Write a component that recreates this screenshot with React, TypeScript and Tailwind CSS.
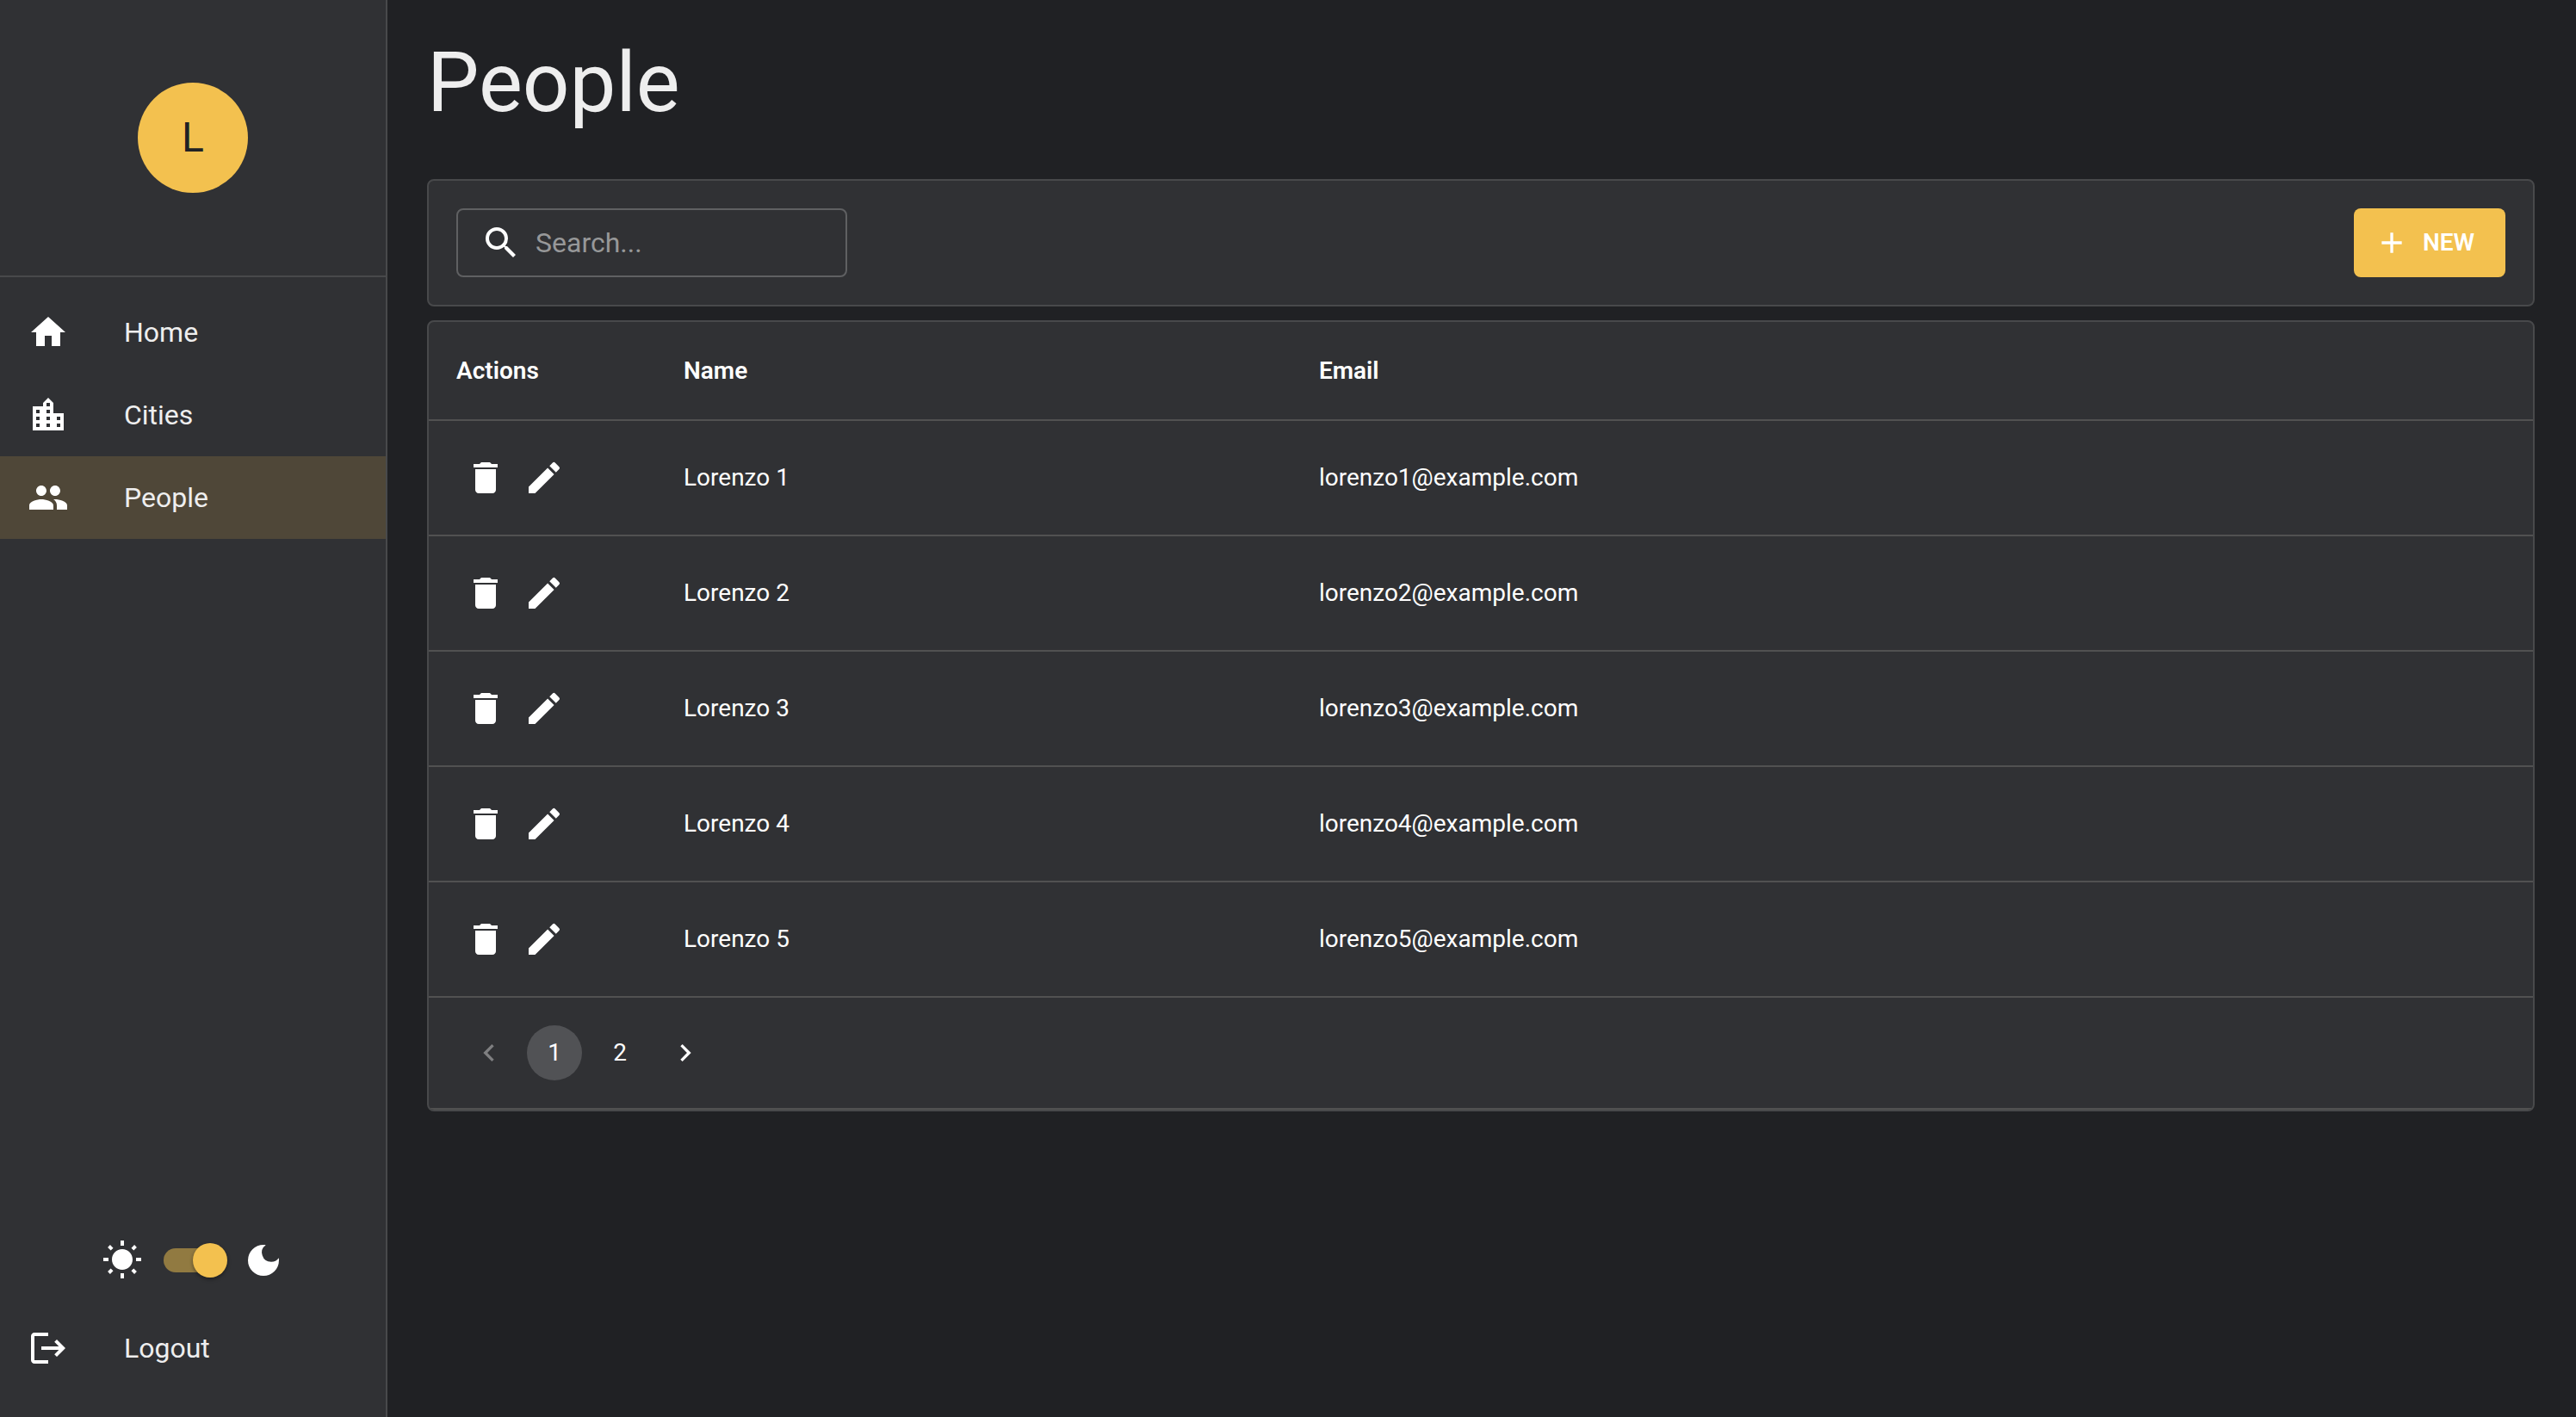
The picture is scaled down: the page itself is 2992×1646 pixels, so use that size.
import { useState } from 'react';
import type { ReactNode } from 'react';
import {
  MdAdd,
  MdDarkMode,
  MdDelete,
  MdEdit,
  MdHome,
  MdLocationCity,
  MdNavigateBefore,
  MdNavigateNext,
  MdPeople,
  MdSearch,
  MdWbSunny,
} from 'react-icons/md';

type Person = { id: number; name: string; email: string };

const people: Person[] = [1, 2, 3, 4, 5].map((id) => ({
  id,
  name: `Lorenzo ${id}`,
  email: `lorenzo${id}@example.com`,
}));

function LogoutIcon() {
  return (
    <svg viewBox="0 0 24 24" fill="currentColor" className="size-12" aria-hidden="true">
      <path d="m17 7-1.41 1.41L18.17 11H8v2h10.17l-2.58 2.58L17 17l5-5zM4 5h8V3H4c-1.1 0-2 .9-2 2v14c0 1.1.9 2 2 2h8v-2H4V5z" />
    </svg>
  );
}

function NavItem({ icon, label, selected = false }: { icon: ReactNode; label: string; selected?: boolean }) {
  return (
    <li>
      <a
        href={`#${label.toLowerCase()}`}
        aria-current={selected ? 'page' : undefined}
        className={`flex h-24 items-center gap-16 px-8 ${selected ? 'bg-[#4f4738]' : ''}`}
      >
        <span className="text-white">{icon}</span>
        <span className="text-[32px] leading-12">{label}</span>
      </a>
    </li>
  );
}

function ThemeSwitch() {
  const [dark, setDark] = useState(true);
  return (
    <div className="flex h-19 items-center justify-center text-white">
      <MdWbSunny className="size-12" aria-hidden="true" />
      <input
        type="checkbox"
        role="switch"
        aria-label="Dark mode"
        checked={dark}
        onChange={(event) => setDark(event.target.checked)}
        className="relative mx-6 h-7 w-17 appearance-none rounded-full bg-[#917a41] before:absolute before:-top-1.5 before:-left-1.5 before:size-10 before:rounded-full before:bg-[#f3c14f] before:shadow-[0_2px_4px_rgba(0,0,0,0.4)] checked:before:left-[34px]"
      />
      <MdDarkMode className="size-12" aria-hidden="true" />
    </div>
  );
}

function Sidebar() {
  return (
    <aside className="flex w-[450px] shrink-0 flex-col border-r-2 border-[#48494b] bg-[#303134]">
      <div className="flex justify-center border-b-2 border-[#48494b] py-24">
        <div className="flex size-32 items-center justify-center rounded-full bg-[#f3c14f] text-5xl text-[#202124]">
          L
        </div>
      </div>
      <nav aria-label="Main" className="grow">
        <ul className="py-4">
          <NavItem icon={<MdHome className="size-12" />} label="Home" />
          <NavItem icon={<MdLocationCity className="size-12" />} label="Cities" />
          <NavItem icon={<MdPeople className="size-12" />} label="People" selected />
        </ul>
      </nav>
      <div className="pb-4">
        <ThemeSwitch />
        <ul className="py-4">
          <NavItem icon={<LogoutIcon />} label="Logout" />
        </ul>
      </div>
    </aside>
  );
}

function Toolbar() {
  return (
    <div className="flex items-center justify-between rounded-lg border-2 border-[#48494b] bg-[#303134] p-8">
      <label className="flex h-20 w-[454px] items-center gap-4 rounded-lg border-2 border-[#5f6062] px-[26px]">
        <MdSearch className="size-12 shrink-0 text-white" aria-hidden="true" />
        <input
          type="search"
          aria-label="Search"
          placeholder="Search..."
          className="w-full min-w-0 bg-transparent text-[32px] leading-12 outline-none placeholder:text-[#979899]"
        />
      </label>
      <button
        type="button"
        className="flex h-20 min-w-44 items-center gap-4 rounded-lg bg-[#f3c14f] pr-8 pl-6 text-[28px] font-semibold text-white uppercase"
      >
        <MdAdd className="size-10" aria-hidden="true" />
        New
      </button>
    </div>
  );
}

function PageButton({ label, current = false }: { label: string; current?: boolean }) {
  return (
    <button
      type="button"
      aria-label={`Page ${label}`}
      aria-current={current ? 'page' : undefined}
      className={`size-16 rounded-full ${current ? 'bg-[#515255]' : ''}`}
    >
      {label}
    </button>
  );
}

function PeopleTable() {
  return (
    <div className="overflow-hidden rounded-lg border-2 border-[#48494b] bg-[#303134]">
      <table className="w-full text-left text-[28px] leading-10 text-white">
        <thead>
          <tr className="h-[114px] border-b-2 border-[#515151]">
            <th className="w-66 px-8 font-semibold">Actions</th>
            <th className="px-8 font-semibold">Name</th>
            <th className="px-8 font-semibold">Email</th>
          </tr>
        </thead>
        <tbody>
          {people.map((person) => (
            <tr key={person.id} className="h-[134px] border-b-2 border-[#515151]">
              <td className="px-8">
                <div className="flex">
                  <button type="button" aria-label={`Delete ${person.name}`} className="p-2.5">
                    <MdDelete className="size-12" />
                  </button>
                  <button type="button" aria-label={`Edit ${person.name}`} className="p-2.5">
                    <MdEdit className="size-12" />
                  </button>
                </div>
              </td>
              <td className="px-8">{person.name}</td>
              <td className="px-8">{person.email}</td>
            </tr>
          ))}
        </tbody>
        <tfoot>
          <tr className="h-[130px] border-b-2 border-[#515151]">
            <td colSpan={3} className="px-8">
              <div className="flex gap-3 px-1.5">
                <button
                  type="button"
                  disabled
                  aria-label="Previous page"
                  className="flex size-16 items-center justify-center opacity-38"
                >
                  <MdNavigateBefore className="size-10" />
                </button>
                <PageButton label="1" current />
                <PageButton label="2" />
                <button type="button" aria-label="Next page" className="flex size-16 items-center justify-center">
                  <MdNavigateNext className="size-10" />
                </button>
              </div>
            </td>
          </tr>
        </tfoot>
      </table>
    </div>
  );
}

export default function App() {
  return (
    <div className="flex min-h-screen bg-[#202124] font-[Roboto,sans-serif] text-[#eeeeee]">
      <Sidebar />
      <main className="min-w-0 grow pt-10 pr-12 pb-10 pl-[46px]">
        <h1 className="mb-14 text-8xl leading-28">People</h1>
        <div className="flex flex-col gap-4">
          <Toolbar />
          <PeopleTable />
        </div>
      </main>
    </div>
  );
}
